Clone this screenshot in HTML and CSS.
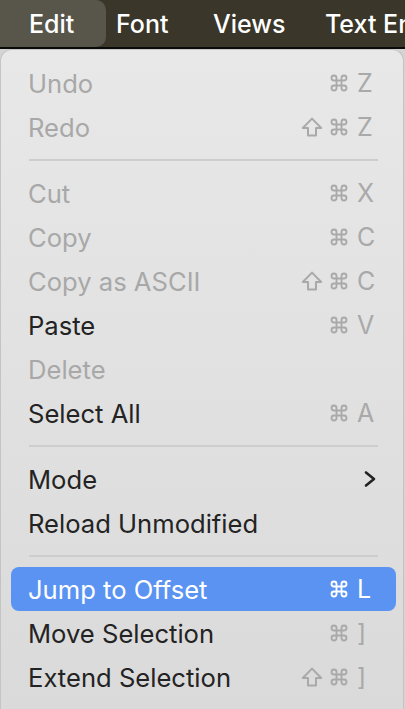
FILE: index.html
```html
<!DOCTYPE html>
<html>
<head>
<meta charset="utf-8">
<link rel="stylesheet" href="styles.css">
</head>
<body>
<div class="menubar">
  <div class="mb-item mb-edit">Edit</div>
  <div class="mb-item mb-font">Font</div>
  <div class="mb-item mb-views">Views</div>
  <div class="mb-item mb-text">Text Encoding</div>
</div>
<div class="menu">
  <div class="item disabled"><span class="label">Undo</span><span class="sc"><span class="mods"><svg class="cmd" viewBox="0 0 24 24"><path d="M15 6v12a3 3 0 1 0 3-3H6a3 3 0 1 0 3 3V6a3 3 0 1 0-3 3h12a3 3 0 1 0-3-3"/></svg></span><span class="key">Z</span></span></div>
  <div class="item disabled"><span class="label">Redo</span><span class="sc"><span class="mods"><svg class="shift" viewBox="0 0 22 20"><path d="M11 1.6L1.8 11H7v7.4h8V11h5.2z"/></svg><svg class="cmd" viewBox="0 0 24 24"><path d="M15 6v12a3 3 0 1 0 3-3H6a3 3 0 1 0 3 3V6a3 3 0 1 0-3 3h12a3 3 0 1 0-3-3"/></svg></span><span class="key">Z</span></span></div>
  <div class="sep"></div>
  <div class="item disabled"><span class="label">Cut</span><span class="sc"><span class="mods"><svg class="cmd" viewBox="0 0 24 24"><path d="M15 6v12a3 3 0 1 0 3-3H6a3 3 0 1 0 3 3V6a3 3 0 1 0-3 3h12a3 3 0 1 0-3-3"/></svg></span><span class="key">X</span></span></div>
  <div class="item disabled"><span class="label">Copy</span><span class="sc"><span class="mods"><svg class="cmd" viewBox="0 0 24 24"><path d="M15 6v12a3 3 0 1 0 3-3H6a3 3 0 1 0 3 3V6a3 3 0 1 0-3 3h12a3 3 0 1 0-3-3"/></svg></span><span class="key">C</span></span></div>
  <div class="item disabled"><span class="label">Copy as ASCII</span><span class="sc"><span class="mods"><svg class="shift" viewBox="0 0 22 20"><path d="M11 1.6L1.8 11H7v7.4h8V11h5.2z"/></svg><svg class="cmd" viewBox="0 0 24 24"><path d="M15 6v12a3 3 0 1 0 3-3H6a3 3 0 1 0 3 3V6a3 3 0 1 0-3 3h12a3 3 0 1 0-3-3"/></svg></span><span class="key">C</span></span></div>
  <div class="item"><span class="label">Paste</span><span class="sc"><span class="mods"><svg class="cmd" viewBox="0 0 24 24"><path d="M15 6v12a3 3 0 1 0 3-3H6a3 3 0 1 0 3 3V6a3 3 0 1 0-3 3h12a3 3 0 1 0-3-3"/></svg></span><span class="key">V</span></span></div>
  <div class="item disabled"><span class="label">Delete</span></div>
  <div class="item"><span class="label">Select All</span><span class="sc"><span class="mods"><svg class="cmd" viewBox="0 0 24 24"><path d="M15 6v12a3 3 0 1 0 3-3H6a3 3 0 1 0 3 3V6a3 3 0 1 0-3 3h12a3 3 0 1 0-3-3"/></svg></span><span class="key">A</span></span></div>
  <div class="sep"></div>
  <div class="item"><span class="label">Mode</span><svg class="chev" viewBox="0 0 14 18"><path d="M3 2.5l8 6.5-8 6.5"/></svg></div>
  <div class="item"><span class="label">Reload Unmodified</span></div>
  <div class="sep"></div>
  <div class="item active"><span class="label">Jump to Offset</span><span class="sc"><span class="mods"><svg class="cmd" viewBox="0 0 24 24"><path d="M15 6v12a3 3 0 1 0 3-3H6a3 3 0 1 0 3 3V6a3 3 0 1 0-3 3h12a3 3 0 1 0-3-3"/></svg></span><span class="key">L</span></span></div>
  <div class="item"><span class="label">Move Selection</span><span class="sc"><span class="mods"><svg class="cmd" viewBox="0 0 24 24"><path d="M15 6v12a3 3 0 1 0 3-3H6a3 3 0 1 0 3 3V6a3 3 0 1 0-3 3h12a3 3 0 1 0-3-3"/></svg></span><span class="key">]</span></span></div>
  <div class="item"><span class="label">Extend Selection</span><span class="sc"><span class="mods"><svg class="shift" viewBox="0 0 22 20"><path d="M11 1.6L1.8 11H7v7.4h8V11h5.2z"/></svg><svg class="cmd" viewBox="0 0 24 24"><path d="M15 6v12a3 3 0 1 0 3-3H6a3 3 0 1 0 3 3V6a3 3 0 1 0-3 3h12a3 3 0 1 0-3-3"/></svg></span><span class="key">]</span></span></div>
  <div class="sep"></div>
</div>
</body>
</html>
```
FILE: styles.css
```css
html, body {
  margin: 0;
  padding: 0;
}
body {
  width: 405px;
  height: 709px;
  overflow: hidden;
  background: #d4d4d4;
  font-family: Inter, "Liberation Sans", sans-serif;
}
.menubar {
  display: flex;
  height: 47px;
  background: #3a3629;
  border-bottom: 2px solid #0a0a08;
  overflow: hidden;
  white-space: nowrap;
}
.mb-item {
  flex: none;
  display: flex;
  align-items: center;
  box-sizing: border-box;
  color: #ffffff;
  font-size: 25px;
  font-weight: 500;
  padding-left: 10px;
}
.mb-edit {
  width: 106px;
  padding-left: 29px;
  background: #58564b;
  border-radius: 0 10px 10px 0;
}
.mb-font { width: 97px; }
.mb-views { width: 112px; }
.menu {
  box-sizing: border-box;
  width: 404px;
  margin-left: 0;
  height: 660px;
  padding: 11px 7px 0 10px;
  background: linear-gradient(#e8e8e8, #dadada);
  border: 1px solid #c4c4c4;
  border-bottom: none;
  border-radius: 12px 12px 0 0;
}
.item {
  display: flex;
  align-items: center;
  height: 44px;
  padding: 0 21px 0 17px;
  font-size: 25.6px;
  color: #232323;
  border-radius: 8px;
}
.item.disabled {
  color: #a8a8a8;
}
.label {
  flex: 1;
}
.sc {
  display: flex;
  align-items: center;
  color: #a9a9a9;
}
.mods {
  display: flex;
  align-items: center;
  gap: 2px;
}
.key {
  width: 18px;
  margin-left: 8px;
  text-align: left;
  font-size: 25px;
}
.cmd, .shift {
  fill: none;
  stroke: currentColor;
  display: block;
}
.cmd {
  width: 20px;
  height: 20px;
  stroke-width: 2.2;
}
.shift {
  width: 22px;
  height: 20px;
  stroke-width: 2;
  stroke-linejoin: round;
  margin-right: 4px;
}
.chev {
  width: 14px;
  height: 18px;
  fill: none;
  stroke: #232323;
  stroke-width: 2.6;
  stroke-linecap: round;
  stroke-linejoin: round;
  margin-right: -2px;
}
.item.active {
  background: #5a93f2;
  color: #ffffff;
}
.item.active .sc {
  color: #ffffff;
}
.sep {
  height: 22px;
  display: flex;
  align-items: center;
  margin: 0 18px 0 18px;
}
.sep::before {
  content: "";
  flex: 1;
  height: 2px;
  background: #cdcdcd;
}
```
